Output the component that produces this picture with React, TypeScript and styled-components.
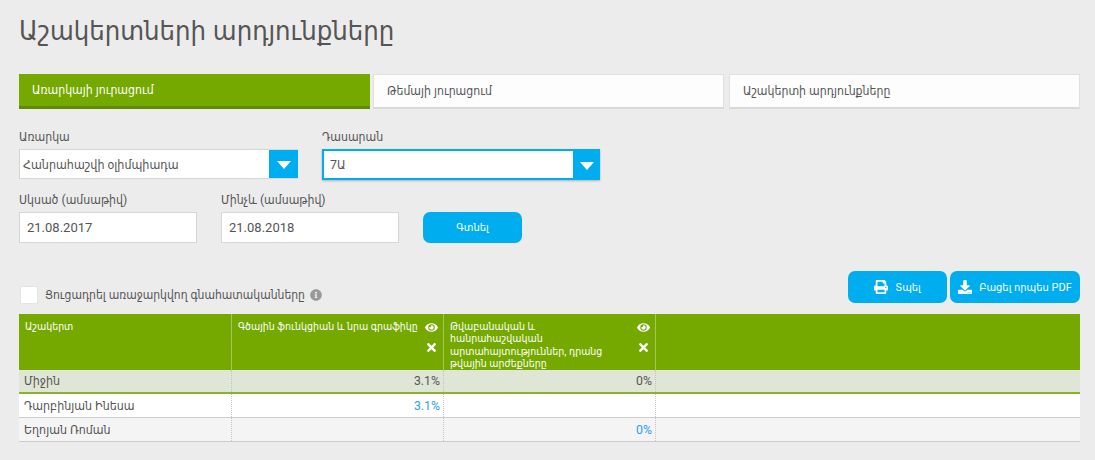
import React from 'react';
import styled, { createGlobalStyle } from 'styled-components';
import { FaPrint, FaDownload, FaEye, FaTimes, FaInfoCircle } from 'react-icons/fa';

const fontStack = 'Roboto, "DejaVu Sans Condensed", "DejaVu Sans", sans-serif';

const GlobalStyle = createGlobalStyle`
  html, body {
    margin: 0;
    padding: 0;
    background: #ececec;
  }
  * {
    box-sizing: border-box;
  }
  body {
    font-family: ${fontStack};
    color: #555;
  }
`;

const Page = styled.div`
  width: 1095px;
  height: 460px;
  overflow: hidden;
  padding: 15px 15px 0 19px;
`;

const Title = styled.h1`
  margin: 0 0 27px;
  height: 32px;
  font-size: 27.2px;
  line-height: 32px;
  font-weight: 400;
  color: #555;
`;

const Tabs = styled.div`
  display: flex;
  height: 35px;
  margin-bottom: 21px;
`;

const Tab = styled.div<{ $active?: boolean; $gap?: number }>`
  width: 351px;
  margin-right: ${(p) => p.$gap ?? 0}px;
  display: flex;
  align-items: center;
  padding: 0 13px;
  font-size: 12.2px;
  background: ${(p) => (p.$active ? '#75a900' : '#fdfdfd')};
  color: ${(p) => (p.$active ? '#fff' : '#555')};
  border: 1px solid #e0e0e0;
  border-bottom: 2px solid #d8d8d8;
  ${(p) => p.$active && 'border: 0; border-bottom: 3px solid #5f8a00;'}
`;

const FormRow = styled.div<{ $bottom: number }>`
  display: flex;
  margin-bottom: ${(p) => p.$bottom}px;
`;

const Field = styled.div<{ $width: number; $gap: number }>`
  width: ${(p) => p.$width}px;
  margin-right: ${(p) => p.$gap}px;
`;

const Label = styled.div`
  height: 13px;
  margin: 1px 0 5px;
  font-size: 12.2px;
  line-height: 13px;
  color: #555;
`;

const Select = styled.div<{ $focused?: boolean }>`
  display: flex;
  height: ${(p) => (p.$focused ? 31 : 30)}px;
  background: #fff;
  border: 1px solid ${(p) => (p.$focused ? '#00aeef' : '#d6d6d6')};
  border-right: 0;
  ${(p) => p.$focused && 'border-width: 2px; border-right: 0; box-shadow: 0 1px 2px rgba(0, 0, 0, 0.25);'}
`;

const SelectValue = styled.div<{ $inset: number }>`
  flex: 1;
  display: flex;
  align-items: center;
  padding: 0 ${(p) => p.$inset}px;
  font-size: 12.4px;
  color: #555;
`;

const Caret = styled.div<{ $width: number }>`
  width: ${(p) => p.$width}px;
  display: flex;
  align-items: center;
  justify-content: center;
  background: #00aeef;
  &::after {
    content: '';
    border-left: 7px solid transparent;
    border-right: 7px solid transparent;
    border-top: 8px solid #fff;
    margin-top: 2px;
  }
`;

const DateInput = styled.div`
  height: 31px;
  display: flex;
  align-items: center;
  padding: 0 7px;
  font-size: 13px;
  color: #555;
  background: #fff;
  border: 1px solid #d6d6d6;
`;

const SearchButton = styled.button`
  width: 99px;
  height: 31px;
  margin: 19px 0 0 -3px;
  border: 0;
  border-radius: 7px;
  background: #00aeef;
  color: #fff;
  font: 400 11px ${fontStack};
`;

const Toolbar = styled.div`
  display: flex;
  align-items: flex-end;
  justify-content: space-between;
  height: 32px;
  margin-bottom: 11px;
`;

const CheckRow = styled.label`
  display: flex;
  align-items: center;
  margin-left: 1px;
  margin-bottom: -1px;
  font-size: 12px;
  color: #555;
`;

const CheckBox = styled.span`
  width: 18px;
  height: 18px;
  margin-right: 7px;
  background: #fff;
  border: 1px solid #e4e4e4;
`;

const InfoIcon = styled(FaInfoCircle)`
  margin-left: 5px;
  font-size: 12px;
  color: #999;
`;

const Actions = styled.div`
  display: flex;
  gap: 3px;
`;

const ActionButton = styled.button<{ $width: number }>`
  width: ${(p) => p.$width}px;
  height: 32px;
  display: flex;
  align-items: center;
  justify-content: center;
  gap: 7px;
  border: 0;
  border-radius: 7px;
  background: #00aeef;
  color: #fff;
  white-space: nowrap;
  padding: 0 4px;
  font: 400 11px ${fontStack};
  svg {
    font-size: 14px;
    flex-shrink: 0;
  }
`;

const Table = styled.div`
  width: 1061px;
`;

const Row = styled.div<{ $kind: 'head' | 'avg' | 'plain' | 'alt' }>`
  display: grid;
  grid-template-columns: 213px 212px 212px 424px;
  height: ${(p) => ({ head: 56, avg: 24, plain: 24, alt: 24 })[p.$kind]}px;
  background: ${(p) => ({ head: '#75a900', avg: '#e0e6d6', plain: '#fff', alt: '#f4f4f4' })[p.$kind]};
  border-bottom: ${(p) => ({ head: '0', avg: '2px solid #8ab32c', plain: '1px solid #ccc', alt: '1px solid #ccc' })[p.$kind]};
`;

const HeadCell = styled.div`
  display: flex;
  justify-content: space-between;
  padding: 7px 5px 0 6px;
  font-size: 10.5px;
  line-height: 12.4px;
  color: #fff;
  border-right: 1px solid #a5c65a;
  &:last-child {
    border-right: 0;
  }
`;

const HeadLabel = styled.span<{ $single?: boolean }>`
  max-width: ${(p) => (p.$single ? 'none' : '165px')};
  white-space: ${(p) => (p.$single ? 'nowrap' : 'normal')};
`;

const HeadIcons = styled.div`
  display: flex;
  flex-direction: column;
  align-items: center;
  gap: 7px;
  margin: 0 0 0 1px;
  flex-shrink: 0;
  font-size: 13px;
`;

const Cell = styled.div<{ $right?: boolean; $link?: boolean }>`
  display: flex;
  align-items: center;
  justify-content: ${(p) => (p.$right ? 'flex-end' : 'flex-start')};
  padding: 0 3px 0 5px;
  font-size: 12.3px;
  color: ${(p) => (p.$link ? '#2e9fe6' : '#555')};
  border-right: 1px dotted #c4c4c4;
  &:last-child {
    border-right: 0;
  }
`;

const rows = [
  { kind: 'avg', name: 'Միջին', a: '3.1%', b: '0%', link: false },
  { kind: 'plain', name: 'Դարբինյան Ինեսա', a: '3.1%', b: '', link: true },
  { kind: 'alt', name: 'Եղոյան Ռոման', a: '', b: '0%', link: true },
] as const;

export default function App() {
  return (
    <Page>
      <GlobalStyle />
      <Title>Աշակերտների արդյունքները</Title>
      <Tabs>
        <Tab $active $gap={3}>Առարկայի յուրացում</Tab>
        <Tab $gap={5}>Թեմայի յուրացում</Tab>
        <Tab>Աշակերտի արդյունքները</Tab>
      </Tabs>
      <FormRow $bottom={13}>
        <Field $width={279} $gap={24}>
          <Label>Առարկա</Label>
          <Select>
            <SelectValue $inset={3}>Հանրահաշվի օլիմպիադա</SelectValue>
            <Caret $width={29} />
          </Select>
        </Field>
        <Field $width={278} $gap={0}>
          <Label>Դասարան</Label>
          <Select $focused>
            <SelectValue $inset={6}>7Ա</SelectValue>
            <Caret $width={27} />
          </Select>
        </Field>
      </FormRow>
      <FormRow $bottom={28}>
        <Field $width={178} $gap={24}>
          <Label>Սկսած (ամսաթիվ)</Label>
          <DateInput>21.08.2017</DateInput>
        </Field>
        <Field $width={178} $gap={27}>
          <Label>Մինչև (ամսաթիվ)</Label>
          <DateInput>21.08.2018</DateInput>
        </Field>
        <SearchButton>Գտնել</SearchButton>
      </FormRow>
      <Toolbar>
        <CheckRow>
          <CheckBox />
          Ցուցադրել առաջարկվող գնահատականները
          <InfoIcon />
        </CheckRow>
        <Actions>
          <ActionButton $width={99}>
            <FaPrint />
            Տպել
          </ActionButton>
          <ActionButton $width={130}>
            <FaDownload />
            Բացել որպես PDF
          </ActionButton>
        </Actions>
      </Toolbar>
      <Table>
        <Row $kind="head">
          <HeadCell>Աշակերտ</HeadCell>
          <HeadCell>
            <HeadLabel $single>Գծային ֆունկցիան և նրա գրաֆիկը</HeadLabel>
            <HeadIcons>
              <FaEye />
              <FaTimes />
            </HeadIcons>
          </HeadCell>
          <HeadCell>
            <HeadLabel>Թվաբանական և հանրահաշվական արտահայտություններ, դրանց թվային արժեքները</HeadLabel>
            <HeadIcons>
              <FaEye />
              <FaTimes />
            </HeadIcons>
          </HeadCell>
          <HeadCell />
        </Row>
        {rows.map((r) => (
          <Row key={r.name} $kind={r.kind}>
            <Cell>{r.name}</Cell>
            <Cell $right $link={r.link}>{r.a}</Cell>
            <Cell $right $link={r.link}>{r.b}</Cell>
            <Cell />
          </Row>
        ))}
      </Table>
    </Page>
  );
}
